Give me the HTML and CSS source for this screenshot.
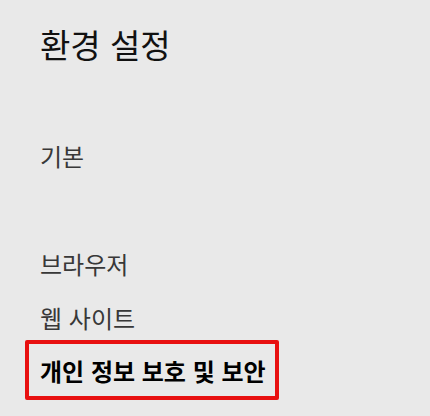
FILE: index.html
```html
<!DOCTYPE html>
<html lang="ko">
<head>
<meta charset="utf-8">
<title>환경 설정</title>
<link rel="stylesheet" href="styles.css">
</head>
<body>
<div class="page">
  <h1 class="title">환경 설정</h1>
  <nav class="menu">
    <div class="item">기본</div>
    <div class="spacer"></div>
    <div class="item">브라우저</div>
    <div class="item">웹 사이트</div>
    <div class="item item-selected">개인 정보 보호 및 보안</div>
  </nav>
</div>
</body>
</html>
```
FILE: styles.css
```css
html, body {
  margin: 0;
  padding: 0;
  background: #e9e9e9;
}
body {
  font-family: "Noto Sans CJK KR", "Noto Sans", sans-serif;
  width: 430px;
  height: 416px;
  overflow: hidden;
}
.page {
  padding: 24px 0 0 40px;
  display: flex;
  flex-direction: column;
}
.title {
  margin: 0;
  font-size: 33px;
  font-weight: 400;
  line-height: 40px;
  color: #111;
}
.menu {
  margin-top: 64px;
  display: flex;
  flex-direction: column;
}
.item {
  height: 54px;
  display: flex;
  align-items: center;
  font-size: 24px;
  color: #383838;
}
.spacer {
  height: 54px;
}
.item-selected {
  box-sizing: border-box;
  height: 60px;
  width: 254px;
  margin: -4px 0 0 -15px;
  padding-left: 11px;
  border: 4px solid #e81010;
  border-radius: 2px;
  font-size: 24px;
  font-weight: 700;
  color: #000;
}
```
